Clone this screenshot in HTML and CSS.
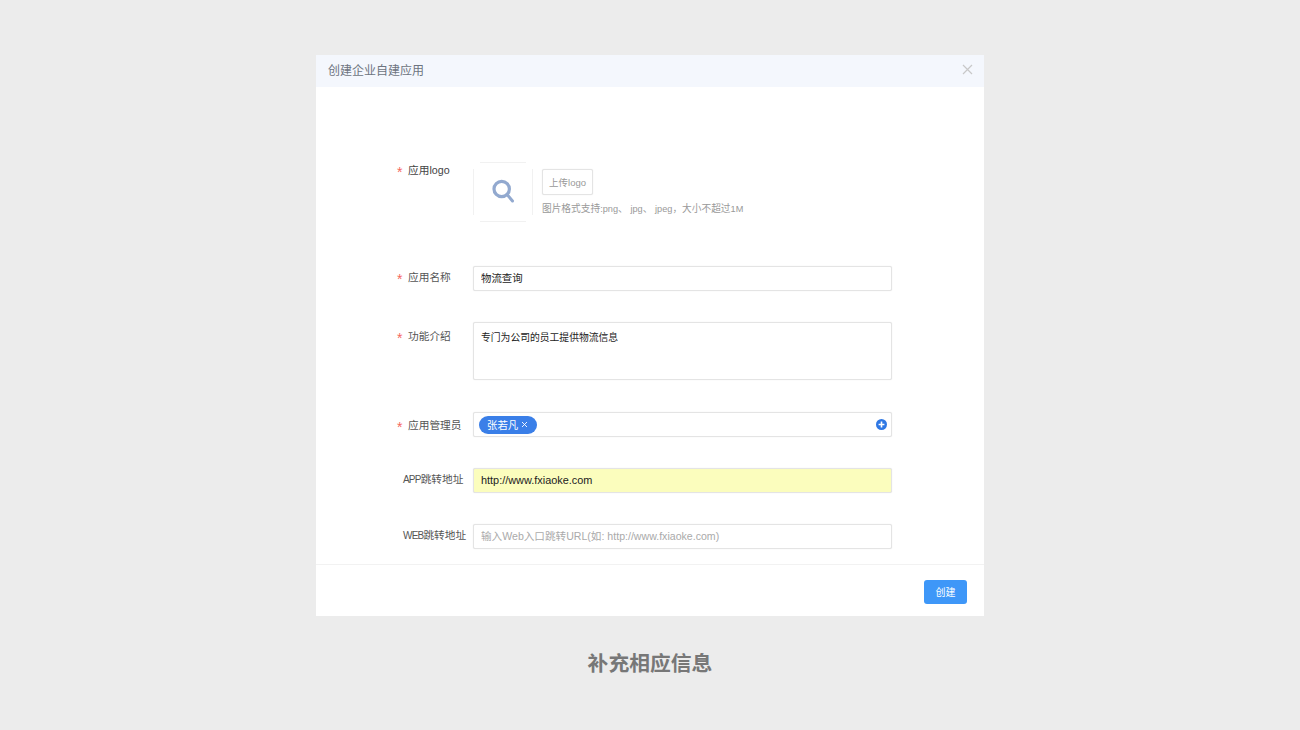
FILE: index.html
```html
<!DOCTYPE html>
<html lang="zh">
<head>
<meta charset="utf-8">
<title>创建企业自建应用</title>
<link rel="stylesheet" href="styles.css">
</head>
<body>
<main class="dialog">
  <header class="dialog-head">
    <span class="dialog-title">创建企业自建应用</span>
    <svg class="close" width="11" height="11" viewBox="0 0 11 11"><path d="M1 1l9 9M10 1l-9 9" stroke="#c8c8c8" stroke-width="1.2" fill="none"/></svg>
  </header>
  <form class="form">
    <div class="row row-logo">
      <label class="label"><span class="star">*</span>应用logo</label>
      <div class="logo-box">
        <svg class="logo-frame" width="60" height="60" viewBox="0 0 60 60"><path d="M7 .5h46M7 59.5h46M.5 7v46M59.5 7v46" stroke="#f1f1f1" fill="none"/></svg>
        <svg width="26" height="26" viewBox="0 0 26 26"><circle cx="11.7" cy="10" r="7.7" fill="none" stroke="#92a9cf" stroke-width="3.2"/><path d="M17 15.5l5.5 6.5" stroke="#92a9cf" stroke-width="3" stroke-linecap="round"/></svg>
      </div>
      <div class="upload">
        <button type="button" class="upload-btn">上传logo</button>
        <p class="hint">图片格式支持<span class="latin">:png</span>、 <span class="latin">jpg</span>、 <span class="latin">jpeg</span>，大小不超过<span class="latin">1M</span></p>
      </div>
    </div>
    <div class="row row-name">
      <label class="label label-input"><span class="star">*</span>应用名称</label>
      <input class="input input-cjk" value="物流查询">
    </div>
    <div class="row row-intro">
      <label class="label label-area"><span class="star">*</span>功能介绍</label>
      <textarea class="input area">专门为公司的员工提供物流信息</textarea>
    </div>
    <div class="row row-admin">
      <label class="label label-input label-admin"><span class="star">*</span>应用管理员</label>
      <div class="input tags">
        <span class="tag">张若凡 <svg width="7" height="7" viewBox="0 0 7 7"><path d="M1 1l5 5M6 1l-5 5" stroke="#fff" stroke-width="0.9" fill="none"/></svg></span>
        <svg width="11" height="11" viewBox="0 0 11 11"><circle cx="5.5" cy="5.5" r="5.5" fill="#2f78e4"/><path d="M2.6 5.5h5.8M5.5 2.6v5.8" stroke="#fff" stroke-width="1.6"/></svg>
      </div>
    </div>
    <div class="row row-next">
      <label class="label label-input label-plain"><span class="latin-label">APP</span>跳转地址</label>
      <input class="input filled" value="http://www.fxiaoke.com">
    </div>
    <div class="row row-next">
      <label class="label label-input label-plain"><span class="latin-label">WEB</span>跳转地址</label>
      <input class="input input-web" placeholder="输入Web入口跳转URL(如: http://www.fxiaoke.com)">
    </div>
  </form>
  <footer class="dialog-foot">
    <button type="button" class="primary">创建</button>
  </footer>
</main>
<p class="caption">补充相应信息</p>
</body>
</html>
```
FILE: styles.css
```css
* { box-sizing: border-box; }
html, body { margin: 0; height: 730px; overflow: hidden; }
body {
  background: #ececec;
  font-family: "Liberation Sans", "Noto Sans CJK SC", sans-serif;
  padding-top: 55px;
}
.dialog {
  width: 668px;
  height: 561px;
  margin: 0 auto;
  background: #fff;
  display: flex;
  flex-direction: column;
}
.dialog-head {
  height: 32px;
  background: #f4f7fd;
  padding: 0 12px;
  display: flex;
  align-items: center;
  justify-content: space-between;
}
.dialog-title { font-size: 12px; line-height: 32px; color: #6d7480; }
.close { margin-top: -3px; margin-right: -1px; }
.form {
  flex: 1;
  padding: 75px 92px 0 81px;
}
.row { display: flex; align-items: flex-start; }
.row-name { margin-top: 44px; }
.row-intro { margin-top: 31px; }
.row-admin { margin-top: 32px; }
.row-next { margin-top: 31px; }
.label {
  width: 76px;
  flex: none;
  font-size: 10.7px;
  line-height: 16px;
  color: #555;
  white-space: nowrap;
}
.row-logo .label { color: #444; }
.label-input { padding-top: 3px; }
.label-area { padding-top: 6px; }
.label-admin { padding-top: 5px; }
.label-plain { padding-left: 6px; }
.latin-label { font-size: 10px; letter-spacing: -0.8px; }
.star {
  display: inline-block;
  width: 11px;
  color: #f5675e;
  font-size: 14px;
  line-height: 10px;
  vertical-align: -3px;
}
.logo-box {
  position: relative;
  width: 60px;
  height: 60px;
  flex: none;
  display: flex;
  align-items: center;
  justify-content: center;
}
.logo-frame { position: absolute; left: 0; top: 0; }
.upload { margin-left: 9px; padding-top: 7px; }
.upload-btn {
  display: block;
  width: 51px;
  height: 26px;
  padding: 0;
  background: #fff;
  border: 1px solid #e4e4e4;
  border-radius: 2px;
  box-shadow: 0 0 1px #ddd;
  font: 9.5px "Liberation Sans", "Noto Sans CJK SC", sans-serif;
  color: #999;
}
.hint {
  margin: 6px 0 0;
  font-size: 9.7px;
  line-height: 15px;
  color: #999;
  white-space: nowrap;
}
.latin { font-size: 9.2px; }
.input {
  display: block;
  width: 419px;
  height: 25px;
  flex: none;
  padding: 0 7px 2px;
  margin: 0;
  background: #fff;
  border: 1px solid #e4e4e4;
  border-radius: 2px;
  box-shadow: 0 0 1px #ddd;
  font: 10.9px "Liberation Sans", "Noto Sans CJK SC", sans-serif;
  color: #222;
  outline: none;
}
.input-cjk { font-size: 10.4px; }
.input-web { font-size: 10.6px; }
.input::placeholder { color: #aaa; opacity: 1; }
.area {
  height: 58px;
  padding: 7px 7px;
  font-size: 9.8px;
  line-height: 16px;
  resize: none;
}
.filled { background: #fbfdbd; }
.tags {
  display: flex;
  align-items: center;
  justify-content: space-between;
  padding: 0 4px 0 5px;
}
.tag {
  display: inline-flex;
  align-items: center;
  gap: 3px;
  height: 18px;
  padding: 0 9px 0 8px;
  border-radius: 9px;
  background: #3a7fe8;
  color: #fff;
  font-size: 10.4px;
}
.dialog-foot {
  height: 52px;
  border-top: 1px solid #f2f2f2;
  padding: 15px 17px 0 0;
  display: flex;
  justify-content: flex-end;
  align-items: flex-start;
}
.primary {
  width: 43px;
  height: 24px;
  padding: 0 0 1px;
  border: 0;
  border-radius: 3px;
  background: #3e97f8;
  color: #fff;
  font: 10px "Liberation Sans", "Noto Sans CJK SC", sans-serif;
}
.caption {
  margin: 32px 0 0;
  text-align: center;
  font-size: 20.8px;
  line-height: 32px;
  font-weight: 700;
  color: #777;
}
```
